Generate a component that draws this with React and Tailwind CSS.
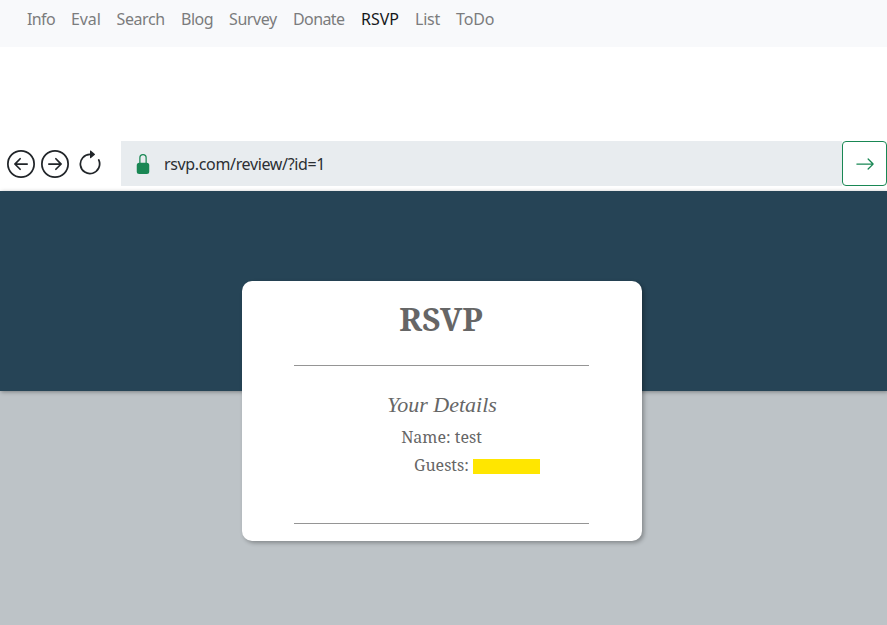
import React from 'react';

const links = [
  ['Info', 'w-[28px] tracking-[-0.6px]'],
  ['Eval', 'w-[29.5px] tracking-[-0.1px]'],
  ['Search', 'w-[48.5px] tracking-[-0.4px]'],
  ['Blog', 'w-[32px] tracking-[-0.5px]'],
  ['Survey', 'w-[48px] tracking-[-0.4px]'],
  ['Donate', 'w-[52px] tracking-[-0.6px]'],
  ['RSVP', 'w-[38px]'],
  ['List', 'w-[25px] tracking-[-0.2px]'],
  ['ToDo', 'w-[39px] tracking-[-0.1px]'],
];

function CircleArrow({ flip }) {
  return (
    <svg width="28" height="28" viewBox="0 0 16 16" fill="#212529" className={flip ? '-scale-x-100' : ''}>
      <path fillRule="evenodd" d="M1 8a7 7 0 1 0 14 0A7 7 0 0 0 1 8m15 0A8 8 0 1 1 0 8a8 8 0 0 1 16 0m-4.500-.5a.5.5 0 0 1 0 1H5.707l2.147 2.146a.5.5 0 0 1-.708.708l-3-3a.5.5 0 0 1 0-.708l3-3a.5.5 0 1 1 .708.708L5.707 7.500z" />
    </svg>
  );
}

function Divider() {
  return <div className="ml-[52px] h-px w-[295px] bg-[#959595]" />;
}

export default function App() {
  return (
    <div className="h-[625px] w-[887px] overflow-hidden bg-white font-['Noto_Sans',sans-serif] text-base">
      <nav className="flex h-[47px] gap-4 bg-[#f8f9fb] pt-[7px] pl-[27px] leading-6 text-[#7b7c7d]">
        {links.map(([label, width]) => (
          <span key={label} className={`${width} whitespace-nowrap ${label === 'RSVP' ? 'text-[#16181a]' : ''}`}>{label}</span>
        ))}
      </nav>
      <div className="mt-[94px] flex h-[45px] items-center">
        <div className="flex w-[121px] shrink-0 items-center pl-[7px]">
          <CircleArrow />
          <span className="w-[6px]" />
          <CircleArrow flip />
          <svg className="ml-[7px]" width="28" height="28" viewBox="0 0 16 16" fill="#212529">
            <path fillRule="evenodd" d="M8 3a5 5 0 1 0 4.546 2.914.5.5 0 0 1 .908-.417A6 6 0 1 1 8 2z" />
            <path d="M8 4.466V.534a.25.25 0 0 1 .410-.192l2.360 1.966c.12.1.12.284 0 .384L8.410 4.658A.25.25 0 0 1 8 4.466" />
          </svg>
        </div>
        <div className="flex h-full flex-1 items-center bg-[#e8ecef] pl-[12px] text-[#2b2f33]">
          <svg width="20" height="20" viewBox="0 0 16 16" fill="#198754">
            <path d="M8 1a2 2 0 0 1 2 2v4H6V3a2 2 0 0 1 2-2m3 6V3a3 3 0 0 0-6 0v4a2 2 0 0 0-2 2v5a2 2 0 0 0 2 2h6a2 2 0 0 0 2-2V9a2 2 0 0 0-2-2" />
          </svg>
          <span className="ml-[11px] tracking-[-0.35px]">rsvp.com/review/?id=1</span>
        </div>
        <button className="flex h-full w-[45px] items-center justify-center rounded border border-[#198754] bg-white">
          <svg width="20" height="20" viewBox="0 0 16 16" fill="#198754">
            <path fillRule="evenodd" d="M1 8a.5.5 0 0 1 .5-.5h11.793l-3.147-3.146a.5.5 0 0 1 .708-.708l4 4a.5.5 0 0 1 0 .708l-4 4a.5.5 0 0 1-.708-.708L13.293 8.500H1.500A.5.5 0 0 1 1 8" />
          </svg>
        </button>
      </div>
      <main className="mt-[5px] h-[434px] bg-[#bdc3c7]">
        <div className="h-[200px] bg-[#264456] pt-[90px] shadow-[1px_1px_4px_rgba(0,0,0,0.35)]">
          <section className="ml-[242px] h-[260px] w-[400px] rounded-[10px] bg-white pt-[14px] text-center font-['Noto_Serif','DejaVu_Serif_Condensed','DejaVu_Serif',serif] text-[#666] shadow-[2px_2px_4px_rgba(0,0,0,0.3)]">
            <h1 className="h-[70px] pr-[2px] text-[32px] leading-[48px] font-bold">RSVP</h1>
            <Divider />
            <h2 className="mt-[24px] h-[33px] font-['Z003','URW_Chancery_L','Liberation_Serif',serif] text-[22px] leading-[30px] italic">Your Details</h2>
            <p className="h-[28px] pr-px leading-[28px]">Name: test</p>
            <p className="flex h-[28px] items-center pl-[172px] leading-[28px]">
              <span>Guests:</span>
              <span className="mt-[2px] ml-[4px] h-[15px] w-[67px] bg-[#ffe600]" />
            </p>
            <div className="pt-[44px]"><Divider /></div>
          </section>
        </div>
      </main>
    </div>
  );
}
